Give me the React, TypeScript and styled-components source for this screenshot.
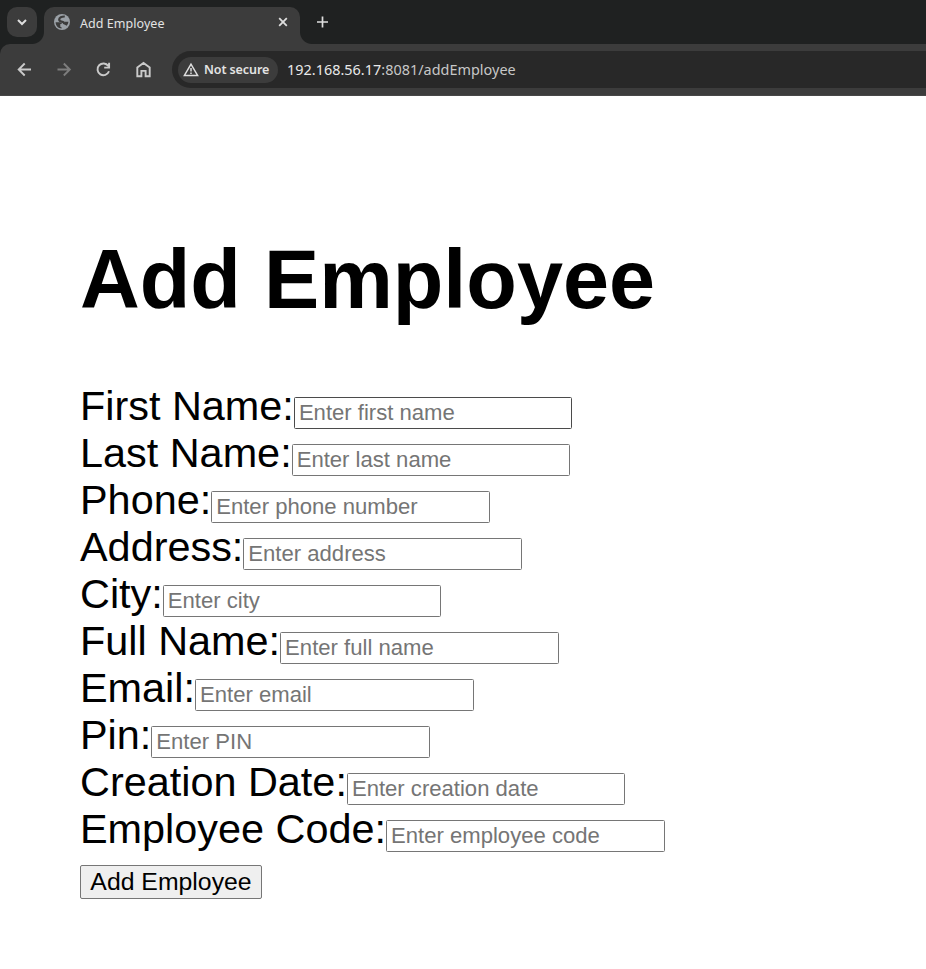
import React from "react";
import styled, { createGlobalStyle } from "styled-components";

const GlobalStyle = createGlobalStyle`
  *, *::before, *::after { box-sizing: border-box; }
  body { margin: 0; background: #fff; overflow: hidden; }
`;

const Window = styled.div`
  width: 926px;
  height: 969px;
  overflow: hidden;
  background: #fff;
`;

const TabStrip = styled.div`
  display: flex;
  height: 44px;
  padding: 7px 0 0 7px;
  background: #1f2121;
`;

const TabSearch = styled.div`
  display: flex;
  align-items: center;
  justify-content: center;
  width: 30px;
  height: 30px;
  margin-right: 7px;
  border-radius: 10px;
  background: #3c3c3c;
`;

const Tab = styled.div`
  position: relative;
  display: flex;
  align-items: center;
  width: 256px;
  height: 37px;
  padding: 0 11px 7px 10px;
  border-radius: 10px 10px 0 0;
  background: #3c3c3c;

  &::before,
  &::after {
    content: "";
    position: absolute;
    bottom: 0;
    width: 12px;
    height: 12px;
  }
  &::before {
    left: -12px;
    background: radial-gradient(circle at 0 0, transparent 11.5px, #3c3c3c 12.5px);
  }
  &::after {
    right: -12px;
    background: radial-gradient(circle at 100% 0, transparent 11.5px, #3c3c3c 12.5px);
  }
`;

const TabTitle = styled.span`
  flex: 1;
  margin-left: 10px;
  padding-top: 3px;
  color: #e3e3e3;
  font: 12.5px/18px "Noto Sans", sans-serif;
  letter-spacing: 0.05px;
  white-space: nowrap;
`;

const NewTab = styled.div`
  display: flex;
  align-items: center;
  height: 30px;
  margin-left: 15px;
`;

const Toolbar = styled.div`
  height: 52px;
  background: #1f2121;
`;

const ToolbarSurface = styled.div`
  display: flex;
  align-items: center;
  height: 52px;
  padding-left: 16px;
  border-radius: 10px 0 0 0;
  border-bottom: 1px solid #474747;
  background: #3c3c3c;
`;

const NavButtons = styled.div`
  display: flex;
  gap: 22.7px;
  width: 156px;
`;

const AddressBar = styled.div`
  display: flex;
  align-items: center;
  flex: 1;
  height: 37px;
  padding-left: 6px;
  border-radius: 19px 0 0 19px;
  background: #282828;
`;

const SecurityChip = styled.div`
  display: flex;
  align-items: center;
  width: 100px;
  height: 26px;
  padding-left: 5px;
  border-radius: 13px;
  background: #3c3c3c;
  color: #e3e3e3;
  font: 600 12.5px/26px "Noto Sans", sans-serif;
  letter-spacing: -0.1px;
  white-space: nowrap;
`;

const ChipLabel = styled.span`
  margin-left: 5px;
`;

const Url = styled.span`
  margin-left: 9px;
  color: #c7c7c7;
  font: 14.4px/20px "Noto Sans", sans-serif;
  letter-spacing: 0.03px;
  white-space: nowrap;
`;

const Host = styled.span`
  color: #e8e8e8;
`;

const Page = styled.main`
  padding: 136px 80px 0;
  color: #000;
  font-family: "Liberation Sans", Arial, sans-serif;
`;

const Heading = styled.h1`
  margin: 0 0 55px;
  font-size: 82.8px;
  line-height: 96px;
  font-weight: 700;
  white-space: nowrap;
`;

const Row = styled.div`
  display: flex;
  align-items: flex-start;
  height: 47px;
`;

const Label = styled.label`
  font-size: 41.4px;
  line-height: 47px;
  white-space: nowrap;
`;

const Input = styled.input<{ $active?: boolean }>`
  width: 278.6px;
  height: 32px;
  margin: 14px 0 0;
  padding: 0 4px;
  border: 1px solid ${(p) => (p.$active ? "#4b4b4b" : "#767676")};
  border-radius: 1.5px;
  outline: none;
  background: #fff;
  font: 22.1px/28px "Liberation Sans", Arial, sans-serif;

  &::placeholder {
    color: #757575;
    opacity: 1;
  }
`;

const SubmitButton = styled.button`
  display: block;
  width: 182px;
  height: 34px;
  margin: 12px 0 0;
  padding: 0 0 1px;
  border: 1px solid #767676;
  border-radius: 2px;
  background: #efefef;
  color: #000;
  font: 24.8px/31px "Liberation Sans", Arial, sans-serif;
  white-space: nowrap;
`;

const fields = [
  ["First Name:", "Enter first name"],
  ["Last Name:", "Enter last name"],
  ["Phone:", "Enter phone number"],
  ["Address:", "Enter address"],
  ["City:", "Enter city"],
  ["Full Name:", "Enter full name"],
  ["Email:", "Enter email"],
  ["Pin:", "Enter PIN"],
  ["Creation Date:", "Enter creation date"],
  ["Employee Code:", "Enter employee code"],
];

const Icon = styled.svg`
  flex: none;
  display: block;
  fill: none;
  stroke: currentColor;
`;

const NavIcon = styled(Icon)<{ $dim?: boolean }>`
  color: ${(p) => (p.$dim ? "#7d7d7d" : "#cacaca")};
  stroke-width: 1.9;
`;

const LightIcon = styled(Icon)`
  color: #dedede;
`;

export default function App() {
  return (
    <Window>
      <GlobalStyle />
      <TabStrip>
        <TabSearch>
          <LightIcon width="12" height="12" viewBox="0 0 12 12" strokeWidth="2">
            <path d="M2 4l4 4 4-4" />
          </LightIcon>
        </TabSearch>
        <Tab>
          <svg width="16" height="16" viewBox="0 0 16 16">
            <circle cx="8" cy="8" r="8" fill="#9aa0a6" />
            <path
              d="M10.800 2.500C7.500 2.400 5.200 3.500 5.200 5.500c0 1.800 1.600 2.100 3.200 2.300 1.600.2 1.700 1.200 1.500 2.400"
              fill="none"
              stroke="#3c3c3c"
              strokeWidth="2.2"
            />
            <path
              d="M1.600 8.200h3.900c1.500 0 2.300.7 2.300 1.900H6.300v2.200c0 .7.500 1 1.300 1v1.100C4.300 14.400 1.700 11.700 1.600 8.200zM10.500 7.700h3.900c-.1 1.500-.7 2.900-1.700 4l-2.200-1.100z"
              fill="#3c3c3c"
            />
          </svg>
          <TabTitle>Add Employee</TabTitle>
          <LightIcon width="12" height="12" viewBox="0 0 12 12" strokeWidth="1.8">
            <path d="M2.200 2.200l7.600 7.600M9.800 2.200L2.200 9.800" />
          </LightIcon>
        </Tab>
        <NewTab>
          <LightIcon width="14" height="14" viewBox="0 0 14 14" strokeWidth="1.7">
            <path d="M7.500 1.500v11M2 7h11" />
          </LightIcon>
        </NewTab>
      </TabStrip>
      <Toolbar>
        <ToolbarSurface>
          <NavButtons>
            <NavIcon width="17" height="17" viewBox="0 0 17 17">
              <path d="M15 8.500H3M8.700 2.500l-6 6 6 6" />
            </NavIcon>
            <NavIcon $dim width="17" height="17" viewBox="0 0 17 17">
              <path d="M1.500 8.500h12M7.800 2.500l6 6-6 6" />
            </NavIcon>
            <NavIcon width="17" height="17" viewBox="0 0 17 17">
              <path d="M13.300 5A5.900 5.900 0 1 0 14 10.300M14.100 1.800v4.800H9.200" />
            </NavIcon>
            <NavIcon width="17" height="17" viewBox="0 0 17 17">
              <path d="M2.300 6.600L8.500 2l6.200 4.600v8.700h-4.100V9.900H6.400v5.400H2.300z" />
            </NavIcon>
          </NavButtons>
          <AddressBar>
            <SecurityChip>
              <LightIcon width="16" height="16" viewBox="0 0 16 16" strokeWidth="1.500">
                <path d="M8 2.200L1.400 13.400h13.200zM8 5.900v3.700M8 10.600v1.400" />
              </LightIcon>
              <ChipLabel>Not secure</ChipLabel>
            </SecurityChip>
            <Url>
              <Host>192.168.56.17</Host>:8081/addEmployee
            </Url>
          </AddressBar>
        </ToolbarSurface>
      </Toolbar>
      <Page>
        <Heading>Add Employee</Heading>
        {fields.map(([label, placeholder], i) => (
          <Row key={label}>
            <Label htmlFor={`field-${i}`}>{label}</Label>
            <Input id={`field-${i}`} placeholder={placeholder} $active={i === 0} />
          </Row>
        ))}
        <SubmitButton type="button">Add Employee</SubmitButton>
      </Page>
    </Window>
  );
}
